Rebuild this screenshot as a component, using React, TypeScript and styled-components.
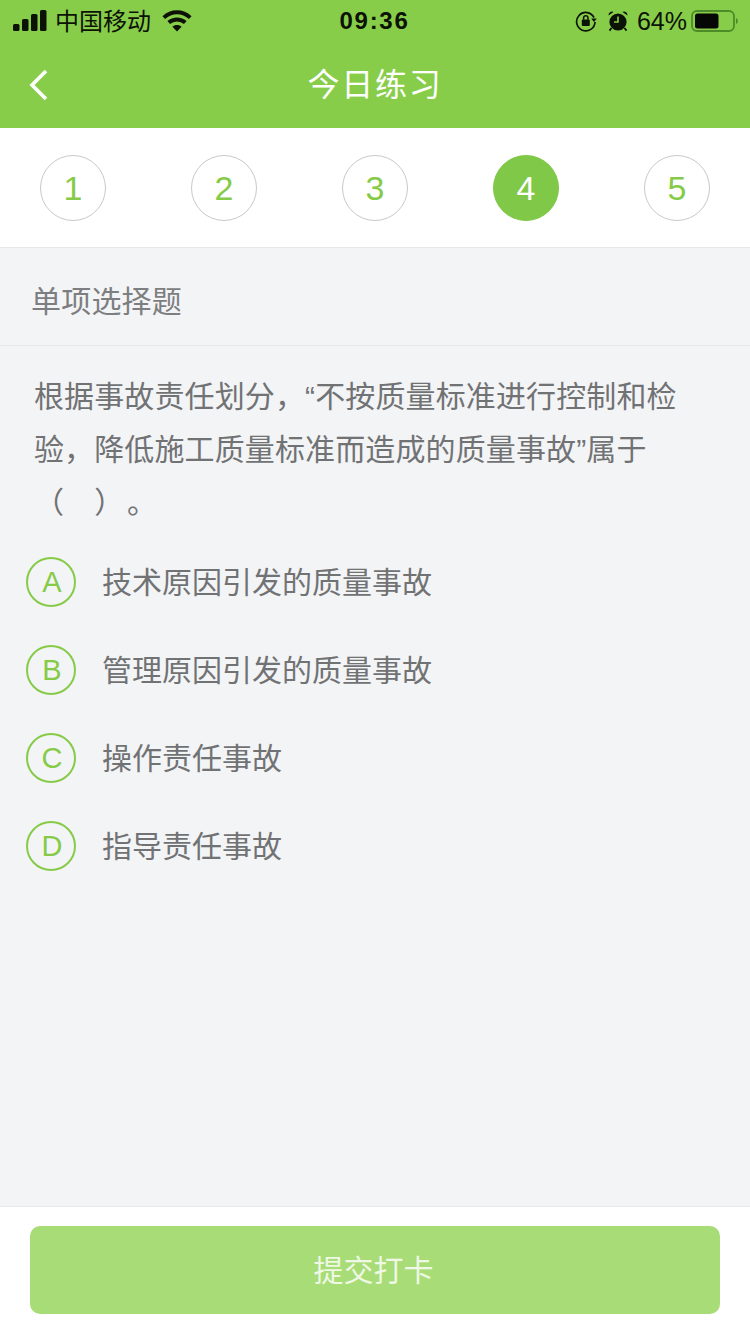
import React from 'react';
import styled, { createGlobalStyle } from 'styled-components';

const Global = createGlobalStyle`
  html, body { margin: 0; padding: 0; }
  body { font-family: "Liberation Sans", "Noto Sans CJK SC", sans-serif; background: #f3f4f6; }
`;
const Page = styled.div`
  width: 750px; height: 1334px; display: flex; flex-direction: column; background: #f3f4f6; overflow: hidden;
`;
const Header = styled.header`
  height: 128px; flex: none; background: #88cd4a; display: flex; flex-direction: column;
`;
const StatusBar = styled.div`
  height: 42px; flex: none; display: grid; grid-template-columns: 1fr auto 1fr; align-items: center;
  padding: 0 12px 0 13px; color: #0c1206;
`;
const StatusLeft = styled.div`display: flex; align-items: center;`;
const StatusRight = styled.div`display: flex; align-items: center; justify-content: flex-end;`;
const Carrier = styled.span`font-size: 24px; line-height: 30px; margin: 2px 11px 0 8px;`;
const Clock = styled.span`font-size: 24px; font-weight: 700; letter-spacing: 1.7px; margin-left: -2px;`;
const Percent = styled.span`font-size: 25px; line-height: 30px; margin: 0 4px 0 8px;`;
const AlarmIcon = styled.svg`margin-left: 10px;`;
const NavBar = styled.div`
  flex: 1; display: flex; align-items: center; justify-content: center; position: relative;
`;
const Back = styled.svg`position: absolute; left: 28px; top: 26px;`;
const Title = styled.h1`margin: 0; font-size: 32px; line-height: 44px; font-weight: 400; color: #fff; letter-spacing: 1.7px;`;
const Steps = styled.nav`
  height: 120px; flex: none; box-sizing: border-box; background: #fff; border-bottom: 1px solid #e7e7e8;
  display: flex; align-items: center; justify-content: space-between; padding: 1px 40px 0;
`;
const Step = styled.div<{ $active?: boolean }>`
  width: 66px; height: 66px; box-sizing: border-box; border-radius: 50%;
  border: 1px solid ${p => (p.$active ? '#80c847' : '#c9c9c9')};
  background: ${p => (p.$active ? '#80c847' : '#fff')};
  color: ${p => (p.$active ? '#fff' : '#86cb48')};
  display: flex; align-items: center; justify-content: center; font-size: 34px; line-height: 1;
`;
const SectionLabel = styled.div`
  height: 98px; flex: none; box-sizing: border-box; border-bottom: 1px solid #e6e7e9;
  display: flex; align-items: center; padding: 4px 0 0 31px; font-size: 30px; letter-spacing: 0.2px; color: #7d7e80;
`;
const Question = styled.p`
  margin: 0; padding: 24px 0 0 34px; font-size: 30px; line-height: 53px; letter-spacing: 0.12px; color: #717274;
`;
const Options = styled.ul`
  list-style: none; margin: 0; padding: 28px 0 0 26px; display: flex; flex-direction: column; gap: 38px;
`;
const Option = styled.li`display: flex; align-items: center; gap: 26px; height: 50px;`;
const Badge = styled.span`
  width: 50px; height: 50px; box-sizing: border-box; border-radius: 50%; border: 2px solid #86cb48;
  color: #86cb48; display: flex; align-items: center; justify-content: center; padding-left: 2px; font-size: 29px; line-height: 1;
`;
const OptionText = styled.span`font-size: 30px; line-height: 44px; margin-top: 1px; color: #717274;`;
const Spacer = styled.div`flex: 1;`;
const Footer = styled.footer`
  height: 128px; flex: none; box-sizing: border-box; background: #fff; border-top: 1px solid #e9eaeb; padding: 19px 30px 0;
`;
const Submit = styled.button`
  width: 690px; height: 88px; border: 0; border-radius: 10px; background: #a8dc76; color: #eef8e4;
  font-family: inherit; font-size: 30px; padding: 0 3px 4px 0;
`;

const options = [
  ['A', '技术原因引发的质量事故'],
  ['B', '管理原因引发的质量事故'],
  ['C', '操作责任事故'],
  ['D', '指导责任事故'],
];

const App = () => (
  <Page>
    <Global />
    <Header>
      <StatusBar>
        <StatusLeft>
          <svg width="34" height="22" viewBox="0 0 34 22" fill="#0c1206">
            <rect x="0" y="14" width="6.5" height="7" rx="1.5" />
            <rect x="9" y="9" width="6.5" height="12" rx="1.5" />
            <rect x="18" y="4" width="6.5" height="17" rx="1.5" />
            <rect x="27" y="0" width="6.5" height="21" rx="1.5" />
          </svg>
          <Carrier>中国移动</Carrier>
          <svg width="30" height="22" viewBox="0 0 30 22" fill="none" stroke="#0c1206">
            <path d="M1.8 7.6C9.4.6 20.6.6 28.2 7.6" strokeWidth="4" />
            <path d="M6.7 12.6c4.8-4.2 11.8-4.2 16.6 0" strokeWidth="4" />
            <path d="M15 15c-1.9 0-3.4.6-4.6 1.7L15 21.6l4.6-4.9C18.4 15.6 16.9 15 15 15z" fill="#0c1206" stroke="none" />
          </svg>
        </StatusLeft>
        <Clock>09:36</Clock>
        <StatusRight>
          <svg width="22" height="22" viewBox="0 0 22 22" fill="none">
            <path d="M19 7.5A9.2 9.2 0 1 0 20 12" stroke="#0c1206" strokeWidth="1.7" />
            <path d="M16.2 8.5h5.6L19 12z" fill="#0c1206" />
            <rect x="6.8" y="9.6" width="8" height="6.4" rx="1" fill="#0c1206" />
            <path d="M8.6 9.8V8a2.2 2.2 0 0 1 4.4 0v1.8" stroke="#0c1206" strokeWidth="1.5" />
          </svg>
          <AlarmIcon width="22" height="22" viewBox="0 0 22 22" fill="#0c1206">
            <circle cx="11" cy="12" r="8.6" />
            <path d="M1.5 5.5a3.6 3.6 0 0 1 5-3.6zM20.5 5.5a3.6 3.6 0 0 0-5-3.6z" />
            <path d="M4.5 18l-2 2.6M17.5 18l2 2.6" stroke="#0c1206" strokeWidth="1.8" />
            <path d="M11 6.5V12H7" stroke="#88cd4a" strokeWidth="1.6" fill="none" />
          </AlarmIcon>
          <Percent>64%</Percent>
          <svg width="47" height="22" viewBox="0 0 47 22" fill="none">
            <rect x="1" y="1" width="42" height="20" rx="5" stroke="#4d8a28" strokeWidth="1.8" />
            <rect x="4" y="3.5" width="23.5" height="15" rx="2.5" fill="#050805" />
            <path d="M45 8c1.2.5 1.8 1.6 1.8 3s-.6 2.5-1.8 3z" fill="#4d8a28" />
          </svg>
        </StatusRight>
      </StatusBar>
      <NavBar>
        <Back width="22" height="34" viewBox="0 0 22 34" fill="none">
          <path d="M18 3L4 17l14 14" stroke="#fff" strokeWidth="3.6" />
        </Back>
        <Title>今日练习</Title>
      </NavBar>
    </Header>
    <Steps>
      {[1, 2, 3, 4, 5].map(n => (
        <Step key={n} $active={n === 4}>{n}</Step>
      ))}
    </Steps>
    <SectionLabel>单项选择题</SectionLabel>
    <Question>
      根据事故责任划分，“不按质量标准进行控制和检<br />
      验，降低施工质量标准而造成的质量事故”属于<br />
      （　）{'\u200A'}。
    </Question>
    <Options>
      {options.map(([k, t]) => (
        <Option key={k}>
          <Badge>{k}</Badge>
          <OptionText>{t}</OptionText>
        </Option>
      ))}
    </Options>
    <Spacer />
    <Footer>
      <Submit>提交打卡</Submit>
    </Footer>
  </Page>
);

export default App;
